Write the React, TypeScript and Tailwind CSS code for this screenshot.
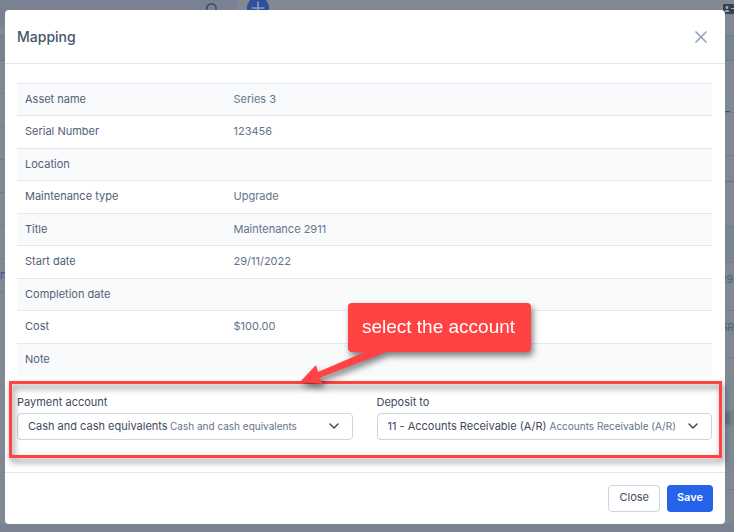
import { ChevronDown, Plus, Search, X } from "lucide-react";

const details = [
  { label: "Asset name", value: "Series 3" },
  { label: "Serial Number", value: "123456" },
  { label: "Location", value: "" },
  { label: "Maintenance type", value: "Upgrade" },
  { label: "Title", value: "Maintenance 2911" },
  { label: "Start date", value: "29/11/2022" },
  { label: "Completion date", value: "" },
  { label: "Cost", value: "$100.00" },
  { label: "Note", value: "" },
];

type AccountSelectProps = {
  id: string;
  label: string;
  account: string;
  type: string;
};

function AccountSelect({ id, label, account, type }: AccountSelectProps) {
  return (
    <div>
      <label htmlFor={id} className="mb-[3px] block text-[11px] leading-4 text-[#3d4a5e]">
        {label}
      </label>
      <div className="flex h-[27px] items-center gap-[2px] rounded border border-[#cbd5e1] px-[10px]">
        <select
          id={id}
          className="appearance-none bg-transparent text-[11px] leading-4 text-[#3d4a5e] outline-none"
        >
          <option>{account}</option>
        </select>
        <span className="text-[10px] leading-4 whitespace-nowrap text-[#64748b]">{type}</span>
        <ChevronDown className="ml-auto size-4 shrink-0 text-[#334155]" />
      </div>
    </div>
  );
}

function Backdrop() {
  return (
    <div aria-hidden="true" className="absolute inset-0 flex flex-col bg-[#808893] text-[#4f5b70]">
      <div className="flex h-[35px] items-start">
        <div className="flex h-[26px] w-[237px] justify-end bg-[#7a8292] pt-[2px] pr-[18px]">
          <Search className="size-[14px] text-[#3b475b]" strokeWidth={2.5} />
        </div>
        <span className="-mt-[3px] ml-[10px] flex size-[22px] items-center justify-center rounded-full bg-[#2f4f9a]">
          <Plus className="size-5 text-[#8f9db8]" />
        </span>
        <svg viewBox="0 0 11 10" className="mt-1 ml-auto h-[10px] w-[11px]">
          <rect width="11" height="10" rx="1" fill="#334155" />
          <circle cx="4" cy="3.5" r="1.4" fill="#a3a9b3" />
          <path d="M1.8 8 C1.8 5.4 6.2 5.4 6.2 8 Z" fill="#a3a9b3" />
          <path d="M8 4.5 H11" stroke="#a3a9b3" />
        </svg>
      </div>
      <div className="h-[26px] border-y border-[#737c8e] bg-[#7a8391]" />
      <div className="flex flex-1 justify-between">
        <div className="w-4">
          <div className="h-[33px] border-b border-[#737c8e]" />
          <div className="h-[33px] border-b border-[#737c8e]" />
          <div className="h-[33px] border-b border-[#737c8e]" />
          <div className="h-[33px] border-b border-[#737c8e]" />
          <div className="h-[33px] border-b border-[#737c8e]" />
          <div className="h-[33px] border-b border-[#737c8e]" />
          <div className="flex h-[33px] items-center border-b border-[#737c8e] font-[Inter,sans-serif] text-[11px] text-[#4b4f9a]">
            n
          </div>
        </div>
        <div className="w-6 font-[Inter,sans-serif] text-[10px]">
          <div className="flex h-[52px] items-end border-b border-[#737c8e] pl-[15px]">
            <div className="h-px w-[5px] bg-[#2f4f9a]" />
          </div>
          <div className="h-[43px] border-b border-[#737c8e]" />
          <div className="h-[26px] border-b border-[#68717f]" />
          <div className="h-[45px] border-b border-[#737c8e]" />
          <div className="h-9 border-b border-[#737c8e] bg-[#7a8391]" />
          <div className="flex h-12 items-center justify-end border-b border-[#737c8e] pr-px pb-[14px]">29</div>
          <div className="flex h-[47px] items-center justify-end border-b border-[#737c8e] pb-[14px]">SR</div>
          <div className="mt-[52px] h-4 bg-[#777f8c] py-[2px] pr-1">
            <div className="h-3 bg-[#6b727e]" />
          </div>
          <div className="h-16 border-b border-[#737c8e]" />
        </div>
      </div>
      <div className="h-2 bg-[#7a8292]" />
    </div>
  );
}

function Callout() {
  return (
    <div className="pointer-events-none absolute -top-[73px] left-[291px] w-[240px] drop-shadow-[2px_4px_3px_rgba(0,0,0,0.5)]">
      <div className="ml-[52px] flex h-[49px] w-[183px] items-center justify-center rounded bg-[#ff4242] pr-[2px] font-['Liberation_Sans',Arial,sans-serif] text-[19px] text-white">
        select the account
      </div>
      <svg viewBox="0 0 100 34" className="-mt-px h-[34px] w-[100px] overflow-visible" fill="#ff4242">
        <path d="M4 31 L20 14 L22 21 L71 0 L93 0 L23 27 L27 33 Z" />
      </svg>
    </div>
  );
}

export default function App() {
  return (
    <main className="relative min-h-screen overflow-hidden">
      <Backdrop />
      <div className="relative pt-[10px] pr-[9px] pb-2 pl-[5px] font-[Inter,sans-serif]">
        <div role="dialog" aria-labelledby="mapping-title" className="rounded bg-white">
          <header className="flex h-[54px] items-center justify-between border-b border-[#e2e5e9] pr-[14px] pl-3">
            <h1 id="mapping-title" className="text-[14px] leading-5 font-medium text-[#475569]">
              Mapping
            </h1>
            <button type="button" aria-label="Close dialog" className="text-[#94a3b8]">
              <X className="size-5" />
            </button>
          </header>

          <div className="pt-[19px] pr-[13px] pl-3">
            <table className="w-full text-left text-[11px] leading-4 text-[#64748b]">
              <tbody>
                {details.map((row) => (
                  <tr key={row.label} className="h-8 border-t border-[#e2e8f0] odd:bg-[#f8fafc] even:h-[33px]">
                    <th scope="row" className="w-[30%] px-2 pb-[2px] font-normal text-[#526075]">
                      {row.label}
                    </th>
                    <td className="px-2 pb-[2px]">{row.value}</td>
                  </tr>
                ))}
              </tbody>
            </table>
          </div>

          <div className="relative pt-[18px] pr-[13px] pb-8 pl-3">
            <div className="grid grid-cols-2 gap-6">
              <AccountSelect
                id="payment-account"
                label="Payment account"
                account="Cash and cash equivalents"
                type="Cash and cash equivalents"
              />
              <AccountSelect
                id="deposit-to"
                label="Deposit to"
                account="11 - Accounts Receivable (A/R)"
                type="Accounts Receivable (A/R)"
              />
            </div>
            <div className="pointer-events-none absolute top-[5px] right-[3px] bottom-[14px] left-1 border-3 border-[#ff4242] drop-shadow-[2px_4px_3px_rgba(0,0,0,0.5)]" />
            <Callout />
          </div>

          <footer className="flex justify-end gap-[7px] border-t border-[#e2e5e9] p-3">
            <button
              type="button"
              className="h-[27px] rounded border border-[#cbd5e1] px-[10px] pb-[2px] text-[11px] text-[#3d4a5e]"
            >
              Close
            </button>
            <button
              type="button"
              className="h-[27px] rounded bg-[#2563eb] px-[10px] pb-[2px] text-[11px] font-semibold text-white"
            >
              Save
            </button>
          </footer>
        </div>
      </div>
    </main>
  );
}
